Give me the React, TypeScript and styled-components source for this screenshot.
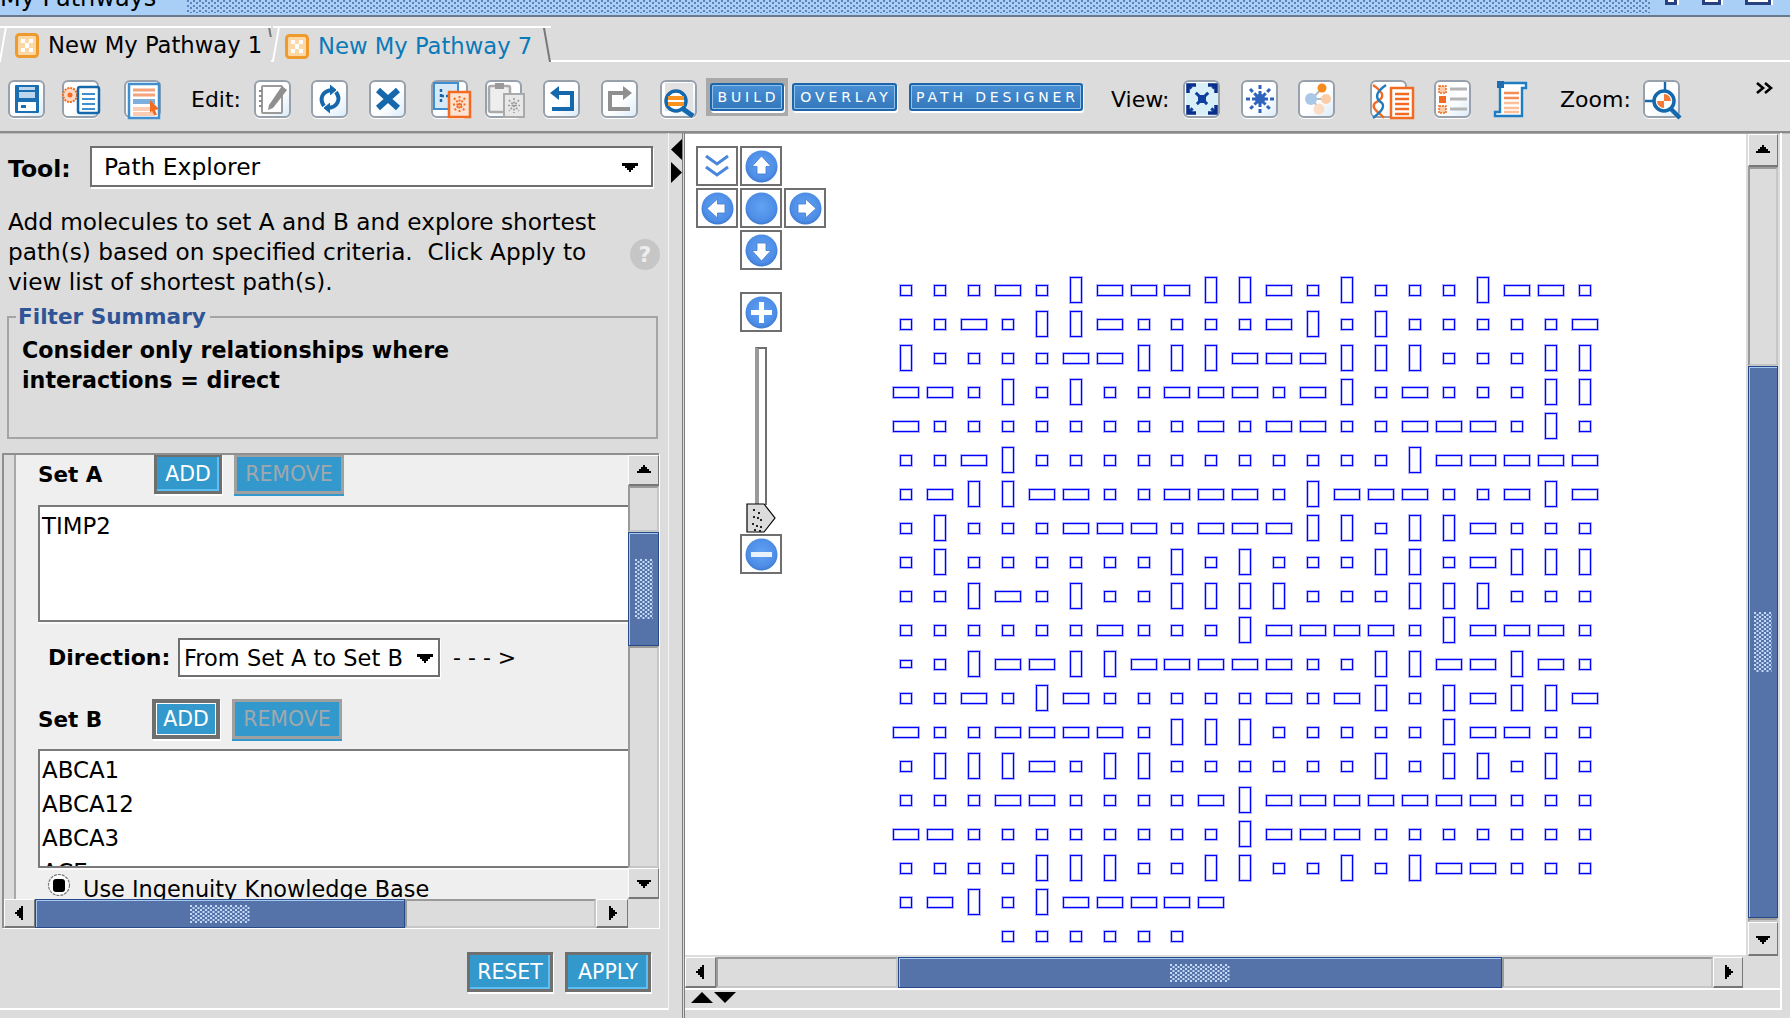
import React from "react";
import styled, { createGlobalStyle } from "styled-components";

const GlobalStyle = createGlobalStyle`
  html, body { margin: 0; padding: 0; background: #dcdcdc; }
  * { box-sizing: border-box; }
`;

const FONT = `"DejaVu Sans", "Noto Sans", sans-serif`;

const GRAPH_ROWS = [
  "ssshsvhhhvvhsvsssvhhs",
  "sshsvvhsssshvsvsssssh",
  "vsssshhvvvhhhvvvsssvv",
  "hhsvsvsshhhshvshsssvv",
  "hsssssssshshhsshhhsvs",
  "sshvsssssssssssvhhhhh",
  "shvvhhsshhhsvhhhsshvh",
  "svssshhhshhhvvsvvhsss",
  "svssssssvsvsssvvshvvv",
  "ssvhsvssvvvvsssvvvsss",
  "sssssshsssvhhhhsvhhhs",
  "tsvhhvvhhhhhssvvhhvhs",
  "sshsvhssssshshvsvhvvh",
  "hsshhhhsvvvsssssvhhss",
  "svvvhsvvssssssvsvvsvs",
  "ssshhsssshvhhhhhhhsss",
  "hhssssssssvhhhsssssss",
  "ssssvvvssvvssvsvhhsss",
  "shvsvhhhhh",
  "---ssssss",
];

const BLUES = { dark: "#1668ad", mid: "#3f8fd0", pale: "#cfe4f4" };
const ORANGE = "#f26b21";

const Page = styled.div`
  width: 1790px;
  height: 1018px;
  overflow: hidden;
  display: flex;
  flex-direction: column;
  background: #dcdcdc;
  color: #000;
  font-family: ${FONT};
  font-size: 22px;
`;

const TitleBar = styled.header`
  flex: none;
  height: 17px;
  display: flex;
  overflow: hidden;
  background: #a9cff7;
  border-bottom: 2px solid #6a7a8d;
`;

const TitleText = styled.div`
  width: 187px;
  flex: none;
  margin-top: -16px;
  font-size: 24px;
  line-height: 28px;
  white-space: nowrap;
`;

const TitleDither = styled.div`
  width: 1463px;
  flex: none;
  background-image: radial-gradient(circle at 1px 1px, #5f83b8 0.9px, transparent 1px),
    radial-gradient(circle at 1px 1px, #5f83b8 0.9px, transparent 1px);
  background-size: 6px 5px;
  background-position: 0 0, 3px 2px;
  margin-bottom: 2px;
`;

const WinButton = styled.div<{ $w: number; $ml: number }>`
  width: ${(p) => p.$w}px;
  height: 5px;
  margin-left: ${(p) => p.$ml}px;
  flex: none;
  background: #fff;
  border: 3px solid #27407f;
  border-top: 0;
  box-shadow: 2px 0 0 #fff;
`;

const TabRow = styled.nav`
  flex: none;
  height: 45px;
  padding-top: 9px;
  display: flex;
  border-bottom: 2px solid #fff;
  font-size: 22.7px;
`;

const Tab = styled.div<{ $active?: boolean }>`
  position: relative;
  height: 36px;
  width: ${(p) => (p.$active ? 278 : 271)}px;
  margin-left: ${(p) => (p.$active ? 2 : 0)}px;
  padding-left: ${(p) => (p.$active ? 12 : 15)}px;
  display: flex;
  align-items: center;
  gap: 9px;
  border-top: 2px solid #fff;
  color: ${(p) => (p.$active ? "#0a7ab8" : "#000")};
  background: #dcdcdc;
  white-space: nowrap;
  z-index: ${(p) => (p.$active ? 1 : 0)};
  ${(p) => p.$active && "height: 38px; margin-bottom: -2px;"}

  &::before {
    content: "";
    position: absolute;
    left: 2px;
    top: -2px;
    bottom: ${(p) => (p.$active ? 2 : 0)}px;
    border-left: 2px solid #fff;
    transform: skewX(-10deg);
  }
  &::after {
    content: "";
    position: absolute;
    right: ${(p) => (p.$active ? 3 : 0)}px;
    top: 0;
    height: ${(p) => (p.$active ? 34 : 9)}px;
    border-right: 2px solid #777;
    transform: skewX(10deg);
  }
`;

const Toolbar = styled.div`
  flex: none;
  height: 71px;
  display: flex;
  align-items: center;
  padding-top: 5px;
  border-bottom: 2px solid #8b8b8b;
  box-shadow: 0 1px 0 #bcbcbc;
`;

const ToolIcon = styled.div<{ $ml: number; $plain?: boolean }>`
  flex: none;
  width: 37px;
  height: 38px;
  margin-left: ${(p) => p.$ml}px;
  border-radius: 6px;
  ${(p) =>
    p.$plain
      ? ""
      : `border: 2px solid #98a1ab;
  background: linear-gradient(135deg, #ffffff 55%, #dcecf8);`}
  box-shadow: ${(p) => (p.$plain ? "none" : "0 1px 0 #fff")};
  display: grid;
  place-items: center;

  svg {
    display: block;
    overflow: visible;
    flex: none;
  }
`;

const ToolLabel = styled.span<{ $ml: number; $w: number }>`
  flex: none;
  width: ${(p) => p.$w}px;
  margin-left: ${(p) => p.$ml}px;
  white-space: nowrap;
`;

const ModeWrap = styled.div<{ $active?: boolean; $ml: number }>`
  flex: none;
  margin-left: ${(p) => p.$ml}px;
  margin-top: -4px;
  padding: ${(p) => (p.$active ? "5px 4px" : "0")};
  background: ${(p) => (p.$active ? "#a9a9a9" : "transparent")};
`;

const ModeButton = styled.div<{ $w: number }>`
  width: ${(p) => p.$w}px;
  height: 28px;
  padding-left: 3px;
  display: flex;
  align-items: center;
  justify-content: center;
  color: #fff;
  font-size: 14px;
  letter-spacing: 3.9px;
  background: linear-gradient(#4a90d4, #3477bb);
  border: 2px solid #1e66ab;
  border-radius: 3px;
  box-shadow: inset 0 0 0 1px #8fc1ef, 1px 2px 0 #fff;
  white-space: nowrap;
`;

const MoreMark = styled.div`
  flex: none;
  margin-left: 76px;
  margin-top: -22px;
  display: flex;
`;

const Main = styled.main`
  flex: 1;
  min-height: 0;
  display: flex;
`;

const LeftPanel = styled.section`
  flex: none;
  width: 669px;
  display: flex;
  flex-direction: column;
  border-right: 1px solid #f4f4f4;
  border-bottom: 2px solid #fff;
  margin-bottom: 8px;
`;

const ToolRow = styled.div`
  margin-top: 13px;
  padding-left: 8px;
  display: flex;
  align-items: center;
`;

const BoldLabel = styled.span<{ $w?: number; $size?: number; $mt?: number }>`
  font-weight: 700;
  flex: none;
  ${(p) => (p.$w ? `width: ${p.$w}px;` : "")}
  ${(p) => (p.$size ? `font-size: ${p.$size}px;` : "")}
  ${(p) => (p.$mt ? `margin-top: ${p.$mt}px;` : "")}
  white-space: nowrap;
`;

const SelectBox = styled.div<{ $w: number; $h: number; $px: number; $size?: number }>`
  flex: none;
  width: ${(p) => p.$w}px;
  height: ${(p) => p.$h}px;
  padding: 0 ${(p) => p.$px}px;
  display: flex;
  align-items: center;
  justify-content: space-between;
  background: #fff;
  border: 2px solid #6f6f6f;
  box-shadow: 1px 2px 0 #fff;
  font-size: ${(p) => p.$size ?? 22}px;
  white-space: nowrap;
`;

const DescRow = styled.div`
  margin-top: 20px;
  padding: 0 8px 0 8px;
  display: flex;
  align-items: center;
  justify-content: space-between;
`;

const Desc = styled.p`
  margin: 0;
  font-size: 23.2px;
  line-height: 30px;
  white-space: nowrap;
`;

const HelpDot = styled.div`
  flex: none;
  width: 30px;
  height: 31px;
  margin: 4px 0 0 0;
  border-radius: 50%;
  background: #c6c6c6;
  color: #eee;
  font-weight: 700;
  font-size: 22px;
  display: grid;
  place-items: center;
`;

const FilterBox = styled.fieldset`
  margin: 6px 0 0 7px;
  padding: 7px 0 0 13px;
  width: 651px;
  height: 136px;
  border: 2px solid #a5a5a5;
  min-inline-size: 0;
`;

const FilterLegend = styled.legend`
  margin-left: -6px;
  padding: 0 4px 0 2px;
  color: #2f5597;
  font-size: 21.6px;
  font-weight: 700;
  line-height: 28px;
`;

const FilterText = styled.div`
  font-weight: 700;
  font-size: 22.2px;
  line-height: 30px;
  margin-top: -3px;
`;

const ScrollFrame = styled.div`
  margin: 14px 0 0 2px;
  width: 657px;
  height: 475px;
  display: grid;
  grid-template-columns: 624px 31px;
  grid-template-rows: 444px 29px;
  border: 2px solid #8f8f8f;
  box-shadow: 1px 1px 0 #fff;
`;

const ScrollView = styled.div`
  overflow: hidden;
  background: #efefef;
  display: flex;
`;

const Gutter = styled.div`
  flex: none;
  width: 12px;
  background: #dcdcdc;
  border-right: 2px solid #a8a8a8;
`;

const Form = styled.div`
  flex: 1;
  min-width: 0;
  padding-left: 22px;
`;

const SetRow = styled.div<{ $mt: number; $ml: number }>`
  margin-top: ${(p) => p.$mt}px;
  margin-left: ${(p) => p.$ml}px;
  display: flex;
  align-items: center;
`;

const ActionButton = styled.div<{ $w: number; $kind: "focus" | "off" | "ring"; $ml?: number }>`
  flex: none;
  width: ${(p) => p.$w}px;
  height: 40px;
  margin-left: ${(p) => p.$ml ?? 0}px;
  display: flex;
  align-items: center;
  justify-content: center;
  background: #3399cc;
  font-size: 20.5px;
  color: ${(p) => (p.$kind === "off" ? "#a1a8ad" : "#fff")};
  border: ${(p) => (p.$kind === "ring" ? 4 : 3)}px solid ${(p) => (p.$kind === "off" ? "#a0a0a0" : "#6f6f6f")};
  box-shadow: ${(p) =>
    p.$kind === "off"
      ? "0 2px 0 #3399cc"
      : p.$kind === "ring"
        ? "inset 0 0 0 1px #fff, 1px 2px 0 #fff"
        : "inset -2px -2px 0 #5cc0f5, 1px 2px 0 #fff"};
`;

const ListBox = styled.div<{ $h: number; $mt: number }>`
  height: ${(p) => p.$h}px;
  margin-top: ${(p) => p.$mt}px;
  padding: 2px 0 0 2px;
  overflow: hidden;
  background: #fff;
  border: solid #7a7a7a;
  border-width: 2px 0 2px 2px;
  box-shadow: 0 2px 0 #fafafa;
  font-size: 22.9px;
`;

const ListItem = styled.div`
  height: 34px;
  line-height: 34px;
`;

const DirectionArrow = styled.span`
  margin-left: 13px;
  white-space: nowrap;
  letter-spacing: 7px;
`;

const RadioRow = styled.div`
  margin: 5px 0 0 9px;
  display: flex;
  align-items: flex-start;
  gap: 12px;
  font-size: 22.4px;
  white-space: nowrap;
  line-height: 30px;
`;

const RadioText = styled.span`
  margin-top: 1px;
`;

const ScrollTrack = styled.div<{ $vertical?: boolean }>`
  min-width: 0;
  min-height: 0;
  display: flex;
  flex-direction: ${(p) => (p.$vertical ? "column" : "row")};
  background: #dcdcdc;
`;

const ScrollArrow = styled.div<{ $size: number; $vertical?: boolean }>`
  flex: none;
  ${(p) => (p.$vertical ? `height: ${p.$size}px;` : `width: ${p.$size}px;`)}
  display: grid;
  place-items: center;
  background: #dcdcdc;
  border: 1px solid #fff;
  border-right-color: #777;
  border-bottom: 2px solid #777;
`;

const TrackGap = styled.div<{ $size: number; $vertical?: boolean }>`
  ${(p) => (p.$size ? `flex: none; ${p.$vertical ? "height" : "width"}: ${p.$size}px;` : "flex: 1;")}
  background: #dcdcdc;
  border: 2px solid #9a9a9a;
  border-right-color: #c6c6c6;
  border-bottom-color: #c6c6c6;
`;

const ScrollThumb = styled.div<{ $size: number; $vertical?: boolean; $dots: number }>`
  flex: none;
  ${(p) => (p.$vertical ? `height: ${p.$size}px;` : `width: ${p.$size}px;`)}
  display: grid;
  place-items: center;
  background: #5573a8;
  border: 1px solid #294a88;
  box-shadow: inset 1px 1px 0 #a4c8f2;

  &::after {
    content: "";
    display: block;
    ${(p) => (p.$vertical ? `width: 18px; height: ${p.$dots}px;` : `width: ${p.$dots}px; height: 18px;`)}
    background-image: radial-gradient(circle at 1px 1px, #c3d9f5 0.9px, transparent 1px),
      radial-gradient(circle at 1px 1px, #c3d9f5 0.9px, transparent 1px);
    background-size: 5px 4px;
    background-position: 0 0, 2.5px 2px;
  }
`;

const Corner = styled.div`
  background: #dcdcdc;
`;

const FooterActions = styled.div`
  margin-top: 24px;
  padding-right: 17px;
  display: flex;
  justify-content: flex-end;
  gap: 12px;
`;

const Splitter = styled.div`
  flex: none;
  width: 16px;
  display: flex;
  flex-direction: column;
  padding: 6px 0 0 2px;
  gap: 2px;
  border-right: 3px double #7e7e7e;
`;

const RightPanel = styled.section`
  flex: none;
  width: 1097px;
  display: flex;
  flex-direction: column;
  border-right: 2px solid #fff;
  border-bottom: 2px solid #fff;
  margin-bottom: 8px;
`;

const CanvasRow = styled.div`
  display: flex;
  height: 822px;
  border-top: 1px solid #a8a8a8;
`;

const Canvas = styled.div`
  position: relative;
  flex: none;
  width: 1061px;
  background: #fff;
  overflow: hidden;
  padding: 139px 0 0 204px;
`;

const Graph = styled.div`
  display: grid;
  grid-template-columns: repeat(21, 33.95px);
  grid-auto-rows: 34px;
  place-items: center;
`;

const sizes: Record<string, [number, number]> = {
  s: [12, 11],
  h: [26, 11],
  v: [12, 26],
  t: [12, 8],
};

const GraphNode = styled.div<{ $kind: string }>`
  width: ${(p) => sizes[p.$kind][0]}px;
  height: ${(p) => sizes[p.$kind][1]}px;
  border: 1px solid #0000ff;
  box-shadow: 0 0 0 1px rgba(0, 0, 255, 0.3), inset 0 0 0 1px rgba(0, 0, 255, 0.22);
`;

const EmptyCell = styled.div``;

const NavPad = styled.div`
  position: absolute;
  left: 11px;
  top: 12px;
  width: 130px;
  display: grid;
  grid-template-columns: repeat(3, 42px);
  grid-auto-rows: 40px;
  gap: 2px;
`;

const NavButton = styled.div<{ $col: number; $row: number }>`
  grid-column: ${(p) => p.$col};
  grid-row: ${(p) => p.$row};
  width: 42px;
  height: 40px;
  display: grid;
  place-items: center;
  background: #fff;
  border: 2px solid #6f6f6f;
`;

const ZoomStack = styled.div`
  position: absolute;
  left: 55px;
  top: 158px;
  width: 42px;
  display: flex;
  flex-direction: column;
  align-items: center;
`;

const SliderTrack = styled.div`
  width: 12px;
  height: 158px;
  margin-top: 15px;
  background: #fff;
  border: 2px solid #6f6f6f;
  border-left-width: 4px;
  border-left-color: #9a9a9a;
  border-bottom: 0;
`;

const SliderThumb = styled.div`
  height: 31px;
  margin-top: -2px;
`;

const VScroll = styled(ScrollTrack)`
  flex: none;
  width: 30px;
  margin-left: 2px;
`;

const HScrollRow = styled.div`
  margin-top: 2px;
  height: 31px;
  width: 1058px;
  display: flex;
`;

const BottomStrip = styled.div`
  flex: 1;
  border-top: 2px solid #fff;
  padding: 2px 0 0 6px;
  display: flex;
  align-items: flex-start;
  gap: 1px;
`;

const Caret = ({ dir }: { dir: "up" | "down" | "left" | "right" }) => {
  const rot = { up: 0, right: 90, down: 180, left: 270 }[dir];
  return (
    <svg width="16" height="16" viewBox="0 0 16 16" style={{ transform: `rotate(${rot}deg)` }} shapeRendering="crispEdges">
      <path d="M8 3 L9 3 L9 5 L11 5 L11 7 L13 7 L13 9 L15 9 L15 11 L1 11 L1 9 L3 9 L3 7 L5 7 L5 5 L7 5 L7 3 Z" fill="#000" />
    </svg>
  );
};

const SplitTriangle = ({ points }: { points: string }) => (
  <svg width="11" height="21" viewBox="0 0 11 21">
    <polygon points={points} fill="#000" />
  </svg>
);

const StripTriangle = ({ points }: { points: string }) => (
  <svg width="22" height="11" viewBox="0 0 22 11">
    <polygon points={points} fill="#000" />
  </svg>
);

const DropMark = () => (
  <svg width="18" height="12" viewBox="0 0 18 12" shapeRendering="crispEdges">
    <path d="M1 2 H17 V5 H14 V7 H12 V9 H10 V11 H8 V9 H6 V7 H4 V5 H1 Z" fill="#000" />
  </svg>
);

const NavIcon = ({ kind }: { kind: "up" | "down" | "left" | "right" | "center" | "plus" | "minus" }) => {
  const id = "nav-" + kind;
  const rot = { up: 0, right: 90, down: 180, left: 270 } as Record<string, number>;
  return (
    <svg width="33" height="33" viewBox="0 0 33 33">
      <defs>
        <radialGradient id={id} cx="50%" cy="45%" r="55%">
          <stop offset="0%" stopColor="#63a3f3" />
          <stop offset="80%" stopColor="#4d8de6" />
          <stop offset="100%" stopColor="#3f78cf" />
        </radialGradient>
      </defs>
      <circle cx="16.5" cy="16.5" r="16" fill={`url(#${id})`} />
      {kind in rot && (
        <path
          d="M16.5 6 L26 16.5 L21 16.5 L21 24 L12 24 L12 16.5 L7 16.5 Z"
          fill="#fff"
          stroke="#3f78cf"
          strokeWidth="0.8"
          transform={`rotate(${rot[kind]} 16.5 16.5)`}
        />
      )}
      {kind === "plus" && <path d="M14 6 H19 V14 H27 V19 H19 V27 H14 V19 H6 V14 H14 Z" fill="#fff" />}
      {kind === "minus" && <rect x="6" y="14" width="21" height="5" fill="#e9f1fb" />}
    </svg>
  );
};

const Chevrons = () => (
  <svg width="26" height="26" viewBox="0 0 26 26" fill="none" stroke="#4a86dc" strokeWidth="3">
    <path d="M2 3 L13 11 L24 3" />
    <path d="M2 14 L13 22 L24 14" />
  </svg>
);

const Thumb = () => (
  <svg width="30" height="31" viewBox="0 0 30 31">
    <path d="M1 1 H18 L29 15 L18 29 H1 Z" fill="#dcdcdc" stroke="#000" strokeWidth="1.2" />
    <g fill="#222">
      {[[7, 6], [12, 9], [7, 13], [11, 14], [14, 16], [6, 20], [10, 22], [14, 23], [8, 26], [13, 27]].map(([x, y]) => (
        <rect key={`${x}-${y}`} x={x} y={y} width="2" height="2" />
      ))}
    </g>
  </svg>
);

const TabGlyph = () => (
  <svg width="24" height="25" viewBox="0 0 24 25">
    <rect x="1.5" y="1.5" width="21" height="22" rx="3" fill="#fbd8a5" stroke="#ee9a2c" strokeWidth="3" />
    <g fill="#fff">
      <rect x="6" y="6" width="4" height="4" />
      <rect x="14" y="6" width="4" height="4" />
      <rect x="10" y="10" width="4" height="5" />
      <rect x="6" y="15" width="4" height="4" />
      <rect x="14" y="15" width="4" height="4" />
    </g>
  </svg>
);

const RadioMark = () => (
  <svg width="24" height="24" viewBox="0 0 24 24">
    <circle cx="12" cy="12" r="10.5" fill="#fff" stroke="#777" strokeWidth="1.2" strokeDasharray="3 1" />
    <rect x="6" y="6" width="12" height="13" rx="3" fill="#000" />
  </svg>
);

const icons: Record<string, React.ReactNode> = {
  save: (
    <svg width="26" height="30" viewBox="0 0 26 30">
      <rect x="1" y="1" width="24" height="28" rx="1" fill="#1a6fb3" />
      <rect x="5" y="3" width="16" height="11" fill="#bcd7ed" />
      <rect x="5" y="6" width="16" height="2" fill="#1a6fb3" />
      <rect x="4" y="18" width="18" height="9" fill="#fff" />
      <rect x="7" y="21" width="5" height="3" fill="#1a6fb3" />
    </svg>
  ),
  saveAs: (
    <svg width="40" height="30" viewBox="0 0 40 30">
      <circle cx="6" cy="11" r="7" fill="#ffd9c4" stroke={ORANGE} strokeWidth="2" strokeDasharray="2 1" />
      <circle cx="6" cy="11" r="2.5" fill={ORANGE} />
      <rect x="14" y="3" width="21" height="26" rx="2" fill="#fff" stroke={BLUES.dark} strokeWidth="2.5" />
      <path d="M18 10 H31 M18 15 H31 M18 20 H31 M18 25 H31" stroke={BLUES.mid} strokeWidth="2" />
    </svg>
  ),
  report: (
    <svg width="36" height="38" viewBox="0 0 36 38">
      <rect x="3" y="2" width="30" height="34" fill="#fff" stroke={BLUES.mid} strokeWidth="2.5" />
      <path d="M7 8 H29 M7 13 H29" stroke="#f4a27c" strokeWidth="3" />
      <rect x="7" y="17" width="22" height="5" fill="#7eaedb" />
      <path d="M7 27 H29 M7 32 H29" stroke="#fbcdb4" strokeWidth="4" />
      <path d="M24 18 L33 27 L29 28 L31 33 L28 33 L26 29 L24 31 Z" fill={ORANGE} />
    </svg>
  ),
  edit: (
    <svg width="30" height="32" viewBox="0 0 30 32">
      <rect x="4" y="3" width="20" height="27" rx="1" fill="#fff" stroke="#9a9a9a" strokeWidth="2" />
      <path d="M4 8 H1 M4 13 H1 M4 18 H1 M4 23 H1" stroke="#8a8a8a" strokeWidth="2" />
      <path d="M11 22 L24 3 L29 7 L15 25 L10 27 Z" fill="#8f8f8f" />
    </svg>
  ),
  refresh: (
    <svg width="24" height="30" viewBox="0 0 24 30" fill="none" stroke={BLUES.dark} strokeWidth="4">
      <path d="M6 22 C1 15 4 7 14 6" />
      <path d="M12 1 L18 6 L12 11" fill={BLUES.dark} strokeWidth="1" />
      <path d="M18 8 C23 15 20 23 10 24" />
      <path d="M12 19 L6 24 L12 29" fill={BLUES.dark} strokeWidth="1" />
    </svg>
  ),
  close: (
    <svg width="24" height="22" viewBox="0 0 24 22">
      <path d="M2 2 L22 20 M22 2 L2 20" stroke={BLUES.dark} strokeWidth="6" />
    </svg>
  ),
  network: (
    <svg width="38" height="36" viewBox="0 0 38 36">
      <rect x="1" y="1" width="24" height="26" fill="#d7e8f6" stroke={BLUES.mid} strokeWidth="2" />
      <path d="M8 7 V22 M8 14 H20" stroke={BLUES.dark} strokeWidth="2.5" strokeDasharray="3 2" />
      <rect x="16" y="10" width="21" height="25" fill="#fbe2d1" stroke={ORANGE} strokeWidth="2.5" />
      <path d="M26.5 14 V31 M20 22.5 H33 M21 16 L32 29 M32 16 L21 29" stroke={ORANGE} strokeWidth="2" strokeDasharray="2 1.5" />
    </svg>
  ),
  paste: (
    <svg width="38" height="36" viewBox="0 0 38 36">
      <rect x="2" y="4" width="21" height="26" rx="2" fill="#eee" stroke="#aaa" strokeWidth="2.5" />
      <rect x="8" y="1" width="9" height="6" fill="#999" />
      <rect x="17" y="12" width="20" height="23" fill="#e8e8e8" stroke="#aaa" strokeWidth="2" />
      <path d="M27 16 V31 M21 23.5 H33 M22 18 L32 29 M32 18 L22 29" stroke="#999" strokeWidth="1.6" strokeDasharray="2 1.5" />
    </svg>
  ),
  undo: (
    <svg width="26" height="26" viewBox="0 0 26 26" fill="none">
      <path d="M8 7 H23 V23 H3" stroke={BLUES.dark} strokeWidth="4" />
      <path d="M10 0 L1 7 L10 14 Z" fill={BLUES.dark} />
    </svg>
  ),
  redo: (
    <svg width="26" height="26" viewBox="0 0 26 26" fill="none">
      <path d="M18 7 H3 V23 H23" stroke="#8f8f8f" strokeWidth="4" />
      <path d="M16 0 L25 7 L16 14 Z" fill="#8f8f8f" />
    </svg>
  ),
  find: (
    <svg width="34" height="36" viewBox="0 0 34 36">
      <rect x="3" y="1" width="28" height="28" fill="#e2e2e2" />
      <circle cx="14" cy="19" r="10" fill="#fff" stroke={BLUES.dark} strokeWidth="3.5" />
      <path d="M6 16 H22 M6 22 H22" stroke="#f7931e" strokeWidth="4" />
      <path d="M21 27 L31 34" stroke={BLUES.dark} strokeWidth="5" />
    </svg>
  ),
  fit: (
    <svg width="32" height="32" viewBox="0 0 32 32">
      <rect x="0" y="0" width="32" height="32" fill="#d9eff8" />
      <path d="M2 2 L30 30 M30 2 L2 30" stroke="#0d3ea0" strokeWidth="3" strokeDasharray="5 6" />
      <path d="M2 10 V2 H10 M22 2 H30 V10 M30 22 V30 H22 M10 30 H2 V22" stroke="#0a2f8a" strokeWidth="3.5" fill="none" />
      <rect x="12" y="12" width="8" height="8" fill="#0d3ea0" />
    </svg>
  ),
  burst: (
    <svg width="30" height="30" viewBox="0 0 30 30">
      <path d="M15 1 V29 M1 15 H29 M5 5 L25 25 M25 5 L5 25" stroke="#2f63bd" strokeWidth="3" strokeDasharray="4 2" />
      <circle cx="15" cy="15" r="5" fill="#2f63bd" />
    </svg>
  ),
  share: (
    <svg width="30" height="32" viewBox="0 0 30 32">
      <path d="M10 16 L20 5 M10 16 L24 16 M10 16 L18 27" stroke="#b9b9b9" strokeWidth="2" />
      <circle cx="20" cy="5" r="4.5" fill="#f58a1f" />
      <circle cx="9" cy="16" r="6" fill="#a9c7e6" />
      <circle cx="24" cy="16" r="5" fill="#fbcda6" />
      <circle cx="17" cy="26" r="5.5" fill="#fbdcc4" />
    </svg>
  ),
  dna: (
    <svg width="44" height="38" viewBox="0 0 44 38" fill="none">
      <path d="M1 3 C14 12 12 16 3 21 C-2 26 8 31 12 36" stroke={ORANGE} strokeWidth="2.4" />
      <path d="M14 3 C4 10 2 16 10 21 C14 26 6 32 1 36" stroke="#1d7cc2" strokeWidth="2.4" />
      <rect x="19" y="6" width="22" height="30" fill="#fff" stroke={ORANGE} strokeWidth="2.5" />
      <path d="M23 12 H37 M23 17 H37 M23 22 H37 M23 27 H37 M23 32 H37" stroke={ORANGE} strokeWidth="2.5" />
    </svg>
  ),
  list: (
    <svg width="32" height="32" viewBox="0 0 32 32">
      <rect x="2" y="3" width="7" height="7" fill="#fbc9a4" stroke={ORANGE} strokeWidth="1.5" strokeDasharray="2 1" />
      <rect x="2" y="13" width="7" height="7" fill={ORANGE} />
      <rect x="2" y="23" width="7" height="7" fill="#fbc9a4" stroke={ORANGE} strokeWidth="1.5" strokeDasharray="2 1" />
      <path d="M13 6 H30 M13 16 H30 M13 26 H30" stroke="#b5b5b5" strokeWidth="3" />
    </svg>
  ),
  scroll: (
    <svg width="34" height="40" viewBox="0 0 34 40">
      <path d="M6 3 H32 V8 H28 V36 H1 V32 H6 Z" fill="#fff" stroke="#1d7cc2" strokeWidth="2.4" />
      <rect x="3" y="1" width="7" height="7" fill="#1d6db0" />
      <path d="M10 13 H25 M10 18 H25" stroke="#f48c57" strokeWidth="2.4" />
      <path d="M10 23 H25 M10 28 H25 M10 32 H25" stroke="#fbbf99" strokeWidth="2.4" />
    </svg>
  ),
  zoom: (
    <svg width="36" height="38" viewBox="0 0 36 38">
      <path d="M0 19 H9 M20 0 V8" stroke={BLUES.dark} strokeWidth="2.4" />
      <circle cx="19" cy="19" r="10" fill="#fff" stroke={BLUES.dark} strokeWidth="3.5" />
      <path d="M19 19 V12 A7 7 0 0 1 26 19 Z M19 19 H12 A7 7 0 0 0 19 26 Z" fill={ORANGE} opacity="0.9" />
      <path d="M26 27 L35 36" stroke={BLUES.dark} strokeWidth="4.5" />
    </svg>
  ),
  more: (
    <svg width="17" height="12" viewBox="0 0 17 12" fill="none" stroke="#000" strokeWidth="2.6">
      <path d="M1 1 L7 6 L1 11 M9 1 L15 6 L9 11" />
    </svg>
  ),
};

export default function App() {
  return (
    <Page>
      <GlobalStyle />
      <TitleBar>
        <TitleText>My Pathways</TitleText>
        <TitleDither />
        <WinButton $w={12} $ml={15} />
        <WinButton $w={19} $ml={25} />
        <WinButton $w={26} $ml={24} />
      </TitleBar>

      <TabRow>
        <Tab>
          <TabGlyph />
          New My Pathway 1
        </Tab>
        <Tab $active>
          <TabGlyph />
          New My Pathway 7
        </Tab>
      </TabRow>

      <Toolbar>
        <ToolIcon $ml={8}>{icons.save}</ToolIcon>
        <ToolIcon $ml={17}>{icons.saveAs}</ToolIcon>
        <ToolIcon $ml={25}>{icons.report}</ToolIcon>
        <ToolLabel $ml={30} $w={63}>Edit:</ToolLabel>
        <ToolIcon $ml={0}>{icons.edit}</ToolIcon>
        <ToolIcon $ml={20}>{icons.refresh}</ToolIcon>
        <ToolIcon $ml={21}>{icons.close}</ToolIcon>
        <ToolIcon $ml={25}>{icons.network}</ToolIcon>
        <ToolIcon $ml={17}>{icons.paste}</ToolIcon>
        <ToolIcon $ml={21}>{icons.undo}</ToolIcon>
        <ToolIcon $ml={21}>{icons.redo}</ToolIcon>
        <ToolIcon $ml={22}>{icons.find}</ToolIcon>
        <ModeWrap $ml={9} $active>
          <ModeButton $w={74}>BUILD</ModeButton>
        </ModeWrap>
        <ModeWrap $ml={4}>
          <ModeButton $w={105}>OVERLAY</ModeButton>
        </ModeWrap>
        <ModeWrap $ml={12}>
          <ModeButton $w={174}>PATH DESIGNER</ModeButton>
        </ModeWrap>
        <ToolLabel $ml={28} $w={72}>View:</ToolLabel>
        <ToolIcon $ml={0}>{icons.fit}</ToolIcon>
        <ToolIcon $ml={21}>{icons.burst}</ToolIcon>
        <ToolIcon $ml={20}>{icons.share}</ToolIcon>
        <ToolIcon $ml={35}>{icons.dna}</ToolIcon>
        <ToolIcon $ml={27}>{icons.list}</ToolIcon>
        <ToolIcon $ml={21} $plain>{icons.scroll}</ToolIcon>
        <ToolLabel $ml={31} $w={83}>Zoom:</ToolLabel>
        <ToolIcon $ml={0}>{icons.zoom}</ToolIcon>
        <MoreMark>{icons.more}</MoreMark>
      </Toolbar>

      <Main>
        <LeftPanel>
          <ToolRow>
            <BoldLabel $w={82} $size={23.5} $mt={5}>Tool:</BoldLabel>
            <SelectBox $w={563} $h={41} $px={12} $size={23.4}>
              Path Explorer
              <DropMark />
            </SelectBox>
          </ToolRow>

          <DescRow>
            <Desc>
              Add molecules to set A and B and explore shortest
              <br />
              path(s) based on specified criteria.&nbsp; Click Apply to
              <br />
              view list of shortest path(s).
            </Desc>
            <HelpDot>?</HelpDot>
          </DescRow>

          <FilterBox>
            <FilterLegend>Filter Summary</FilterLegend>
            <FilterText>
              Consider only relationships where
              <br />
              interactions = direct
            </FilterText>
          </FilterBox>

          <ScrollFrame>
            <ScrollView>
              <Gutter />
              <Form>
                <SetRow $mt={-1} $ml={0}>
                  <BoldLabel $w={116} $size={21.5}>Set A</BoldLabel>
                  <ActionButton $w={68} $kind="focus">ADD</ActionButton>
                  <ActionButton $w={110} $kind="off" $ml={12}>REMOVE</ActionButton>
                </SetRow>
                <ListBox $h={117} $mt={11}>
                  <ListItem>TIMP2</ListItem>
                </ListBox>
                <SetRow $mt={16} $ml={10}>
                  <BoldLabel $w={130}>Direction:</BoldLabel>
                  <SelectBox $w={262} $h={39} $px={4} $size={22.5}>
                    From Set A to Set B
                    <DropMark />
                  </SelectBox>
                  <DirectionArrow>---&gt;</DirectionArrow>
                </SetRow>
                <SetRow $mt={22} $ml={0}>
                  <BoldLabel $w={114} $size={21.5}>Set B</BoldLabel>
                  <ActionButton $w={68} $kind="ring">ADD</ActionButton>
                  <ActionButton $w={110} $kind="off" $ml={12}>REMOVE</ActionButton>
                </SetRow>
                <ListBox $h={119} $mt={10}>
                  <ListItem>ABCA1</ListItem>
                  <ListItem>ABCA12</ListItem>
                  <ListItem>ABCA3</ListItem>
                  <ListItem>ACE</ListItem>
                </ListBox>
                <RadioRow>
                  <RadioMark />
                  <RadioText>Use Ingenuity Knowledge Base</RadioText>
                </RadioRow>
              </Form>
            </ScrollView>
            <ScrollTrack $vertical>
              <ScrollArrow $vertical $size={31}><Caret dir="up" /></ScrollArrow>
              <TrackGap $vertical $size={46} />
              <ScrollThumb $vertical $size={114} $dots={60} />
              <TrackGap $vertical $size={0} />
              <ScrollArrow $vertical $size={31}><Caret dir="down" /></ScrollArrow>
            </ScrollTrack>
            <ScrollTrack>
              <ScrollArrow $size={31}><Caret dir="left" /></ScrollArrow>
              <ScrollThumb $size={370} $dots={60} />
              <TrackGap $size={0} />
              <ScrollArrow $size={32}><Caret dir="right" /></ScrollArrow>
            </ScrollTrack>
            <Corner />
          </ScrollFrame>

          <FooterActions>
            <ActionButton $w={86} $kind="focus">RESET</ActionButton>
            <ActionButton $w={86} $kind="focus">APPLY</ActionButton>
          </FooterActions>
        </LeftPanel>

        <Splitter>
          <SplitTriangle points="11,0 11,21 0,10.5" />
          <SplitTriangle points="0,0 11,10.5 0,21" />
        </Splitter>

        <RightPanel>
          <CanvasRow>
            <Canvas>
              <Graph>
                {GRAPH_ROWS.flatMap((row, r) =>
                  Array.from({ length: 21 }, (_, c) => {
                    const k = row[c];
                    return k && k !== "-" ? (
                      <GraphNode key={`${r}-${c}`} $kind={k} />
                    ) : (
                      <EmptyCell key={`${r}-${c}`} />
                    );
                  }),
                )}
              </Graph>
              <NavPad>
                <NavButton $col={1} $row={1}><Chevrons /></NavButton>
                <NavButton $col={2} $row={1}><NavIcon kind="up" /></NavButton>
                <NavButton $col={1} $row={2}><NavIcon kind="left" /></NavButton>
                <NavButton $col={2} $row={2}><NavIcon kind="center" /></NavButton>
                <NavButton $col={3} $row={2}><NavIcon kind="right" /></NavButton>
                <NavButton $col={2} $row={3}><NavIcon kind="down" /></NavButton>
              </NavPad>
              <ZoomStack>
                <NavButton $col={1} $row={1}><NavIcon kind="plus" /></NavButton>
                <SliderTrack />
                <SliderThumb><Thumb /></SliderThumb>
                <NavButton $col={1} $row={1}><NavIcon kind="minus" /></NavButton>
              </ZoomStack>
            </Canvas>
            <VScroll $vertical>
              <ScrollArrow $vertical $size={33}><Caret dir="up" /></ScrollArrow>
              <TrackGap $vertical $size={199} />
              <ScrollThumb $vertical $size={552} $dots={60} />
              <TrackGap $vertical $size={0} />
              <ScrollArrow $vertical $size={34}><Caret dir="down" /></ScrollArrow>
            </VScroll>
          </CanvasRow>
          <HScrollRow>
            <ScrollArrow $size={31}><Caret dir="left" /></ScrollArrow>
            <TrackGap $size={182} />
            <ScrollThumb $size={604} $dots={60} />
            <TrackGap $size={0} />
            <ScrollArrow $size={30}><Caret dir="right" /></ScrollArrow>
          </HScrollRow>
          <BottomStrip>
            <StripTriangle points="11,0 22,11 0,11" />
            <StripTriangle points="0,0 22,0 11,11" />
          </BottomStrip>
        </RightPanel>
      </Main>
    </Page>
  );
}
